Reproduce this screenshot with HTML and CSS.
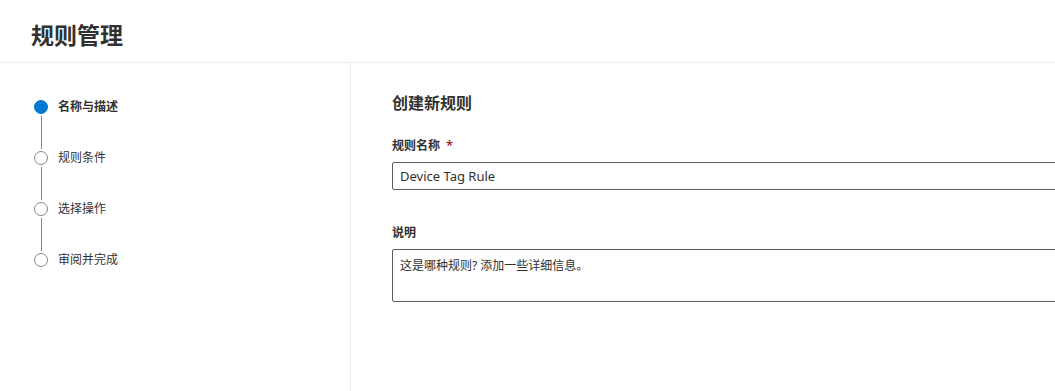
FILE: index.html
```html
<html>
	<head>
		<meta charset="utf-8">
		<link rel="stylesheet" href="styles.css">
	</head>
	<body>
		<div class="header">
			<h1>规则管理</h1>
		</div>

		<div class="main">
			<div class="nav">
				<div class="step active">
					<div class="marker"><span class="dot"></span><span class="line"></span></div>
					<span class="label">名称与描述</span>
				</div>
				<div class="step">
					<div class="marker"><span class="dot"></span><span class="line"></span></div>
					<span class="label">规则条件</span>
				</div>
				<div class="step">
					<div class="marker"><span class="dot"></span><span class="line"></span></div>
					<span class="label">选择操作</span>
				</div>
				<div class="step">
					<div class="marker"><span class="dot"></span></div>
					<span class="label">审阅并完成</span>
				</div>
			</div>

			<div class="content">
				<h2>创建新规则</h2>
				<div class="field">
					<label>规则名称<span class="req">*</span></label>
					<input type="text" value="Device Tag Rule">
				</div>
				<div class="field">
					<label>说明</label>
					<textarea placeholder="这是哪种规则? 添加一些详细信息。"></textarea>
				</div>
			</div>
		</div>
	</body>
</html>
```

FILE: styles.css
```css
*{
	margin:0;
	padding:0;
	box-sizing:border-box;
}
body{
	font-family:"Noto Sans","Noto Sans CJK SC",sans-serif;
	color:#323130;
	background:#fff;
	overflow:hidden;
}
.header{
	height:63px;
	border-bottom:1px solid #edebe9;
	padding:0 31px;
	display:flex;
	align-items:center;
}
.header h1{
	font-size:23px;
	font-weight:600;
	line-height:30px;
	margin-top:8px;
}
.main{
	display:flex;
	height:328px;
	overflow:hidden;
}
.nav{
	width:351px;
	flex-shrink:0;
	border-right:1px solid #edebe9;
	padding:37px 0 0 34px;
}
.step{
	display:flex;
	align-items:flex-start;
}
.marker{
	width:14px;
	display:flex;
	flex-direction:column;
	align-items:center;
}
.dot{
	width:14px;
	height:14px;
	border-radius:50%;
	border:1.5px solid #8a8886;
	background:#fff;
}
.step.active .dot{
	background:#0078d4;
	border-color:#0078d4;
}
.line{
	width:1px;
	height:33px;
	margin:2px 0;
	background:#8a8886;
}
.label{
	font-size:12px;
	line-height:14px;
	margin-left:10px;
	color:#323130;
}
.step.active .label{
	font-weight:600;
}
.content{
	flex:1;
	padding:29px 0 0 41px;
}
.content h2{
	font-size:16px;
	font-weight:600;
	line-height:22px;
	margin-bottom:21px;
}
.field label{
	display:block;
	font-size:12px;
	font-weight:600;
	line-height:20px;
	margin-bottom:6px;
}
.req{
	color:#a4262c;
	font-size:13px;
	margin-left:6px;
}
.field input{
	display:block;
	width:700px;
	height:28px;
	border:1px solid #605e5c;
	border-radius:2px;
	padding:0 7px;
	font-family:"Noto Sans","Noto Sans CJK SC",sans-serif;
	font-size:13px;
	color:#323130;
	margin-bottom:33px;
}
.field textarea{
	display:block;
	width:700px;
	height:53px;
	border:1px solid #605e5c;
	border-radius:2px;
	padding:6px 7px;
	font-family:"Noto Sans","Noto Sans CJK SC",sans-serif;
	font-size:12px;
	resize:none;
}
.field textarea::placeholder{
	color:#323130;
}
```
